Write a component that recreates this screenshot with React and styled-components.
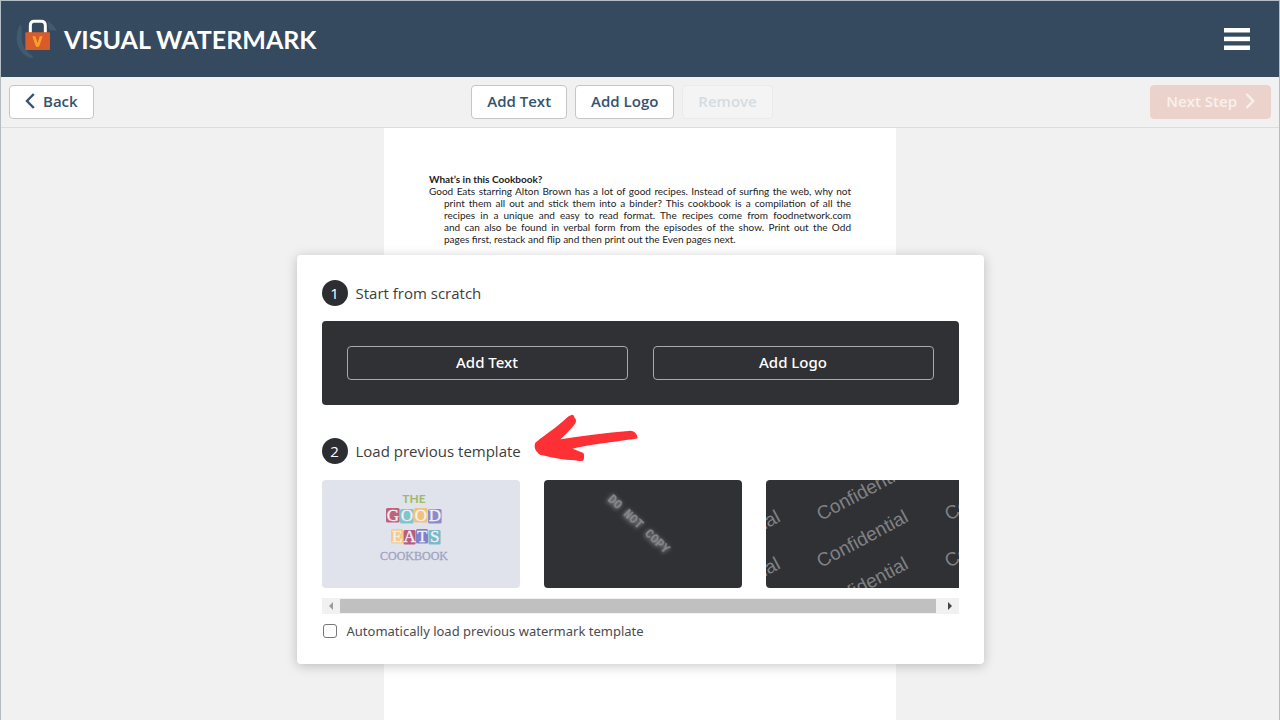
import React from "react";
import styled, { createGlobalStyle } from "styled-components";

const GlobalStyle = createGlobalStyle`
  *, *::before, *::after { box-sizing: border-box; }
  body { margin: 0; background: #f1f1f1; }
  h1, h2, p { margin: 0; }
  button { font: inherit; cursor: pointer; }
`;

const humanist = `"Open Sans", "Noto Sans", sans-serif`;

const Shell = styled.div`
  display: flex;
  flex-direction: column;
  min-height: 100vh;
  border: 1px solid #b4bcc4;
  border-bottom: 0;
  font-family: ${humanist};
`;

const Header = styled.header`
  display: flex;
  align-items: center;
  justify-content: space-between;
  height: 76px;
  padding: 0 29px 0 15px;
  background: #35495f;
`;

const Brand = styled.a`
  display: flex;
  align-items: center;
  gap: 6px;
  color: #fff;
  font-family: Lato, sans-serif;
  font-size: 25px;
  font-weight: 700;
  line-height: 32px;
  text-decoration: none;
  white-space: nowrap;
`;

const MenuButton = styled.button`
  display: flex;
  padding: 0;
  border: 0;
  background: none;
`;

const Toolbar = styled.nav`
  display: flex;
  align-items: center;
  justify-content: space-between;
  height: 51px;
  padding: 0 8px;
  border-bottom: 1px solid #dcdcdc;
  background: #f1f1f1;
`;

const ToolGroup = styled.div`
  display: flex;
  gap: 8px;
`;

const ToolButton = styled.button`
  display: flex;
  align-items: center;
  justify-content: center;
  gap: 8px;
  height: 34px;
  padding: 0 15px 2px;
  border: 1px solid #c6c6c6;
  border-radius: 4px;
  background: #fff;
  color: #34536e;
  font-size: 15px;
  font-weight: 600;
  line-height: 20px;
  white-space: nowrap;

  &:disabled {
    border-color: #e9eaeb;
    background: #f4f4f4;
    color: #d5dbe1;
  }
`;

const NextButton = styled(ToolButton)`
  &:disabled {
    border-color: #ebd3cb;
    background: #ebd3cb;
    color: #f9f0ed;
  }
`;

const Stage = styled.main`
  display: grid;
  flex: 1;
  justify-items: center;
`;

const Sheet = styled.article`
  grid-area: 1 / 1;
  width: 40%;
  min-width: 512px;
  padding: 45px 45px 0;
  background: #fff;
  color: #222;
  font-family: Lato, sans-serif;
  font-size: 10px;
  line-height: 12px;
`;

const SheetTitle = styled.h2`
  font-size: 10px;
  font-weight: 700;
  line-height: 12px;
`;

const SheetText = styled.p`
  padding-left: 15px;
`;

const Line = styled.span`
  display: block;
  text-align: justify;
  text-align-last: justify;

  &:first-child { margin-left: -15px; }
  &:last-child { text-align-last: left; }
`;

const Dialog = styled.section`
  grid-area: 1 / 1;
  align-self: start;
  width: 100%;
  max-width: 687px;
  margin-top: 127px;
  padding: 25px 25px 23px;
  border-radius: 4px;
  background: #fff;
  box-shadow: 0 2px 12px rgba(0, 0, 0, 0.22);
  z-index: 1;
`;

const StepTitle = styled.h2`
  position: relative;
  display: flex;
  align-items: center;
  gap: 8px;
  color: #3c3d40;
  font-size: 15px;
  font-weight: 400;
  line-height: 26px;
`;

const StepNumber = styled.span`
  width: 26px;
  height: 26px;
  border-radius: 50%;
  background: #2d2e31;
  color: #fff;
  text-align: center;
`;

const Arrow = styled.svg`
  position: absolute;
  left: 212px;
  bottom: 2px;
`;

const ScratchPanel = styled.div`
  display: grid;
  grid-template-columns: 1fr 1fr;
  gap: 25px;
  margin: 15px 0 33px;
  padding: 25px;
  border-radius: 4px;
  background: #303135;
`;

const OutlineButton = styled.button`
  height: 34px;
  padding: 0 0 2px;
  border: 1px solid #a9a9ab;
  border-radius: 4px;
  background: none;
  color: #fff;
  font-family: "Noto Sans", sans-serif;
  font-size: 15px;
  font-weight: 500;
  line-height: 20px;
`;

const Templates = styled.div`
  display: flex;
  gap: 24px;
  margin-top: 16px;
  overflow: hidden;
`;

const Template = styled.button`
  flex: none;
  width: 198px;
  height: 108px;
  padding: 0;
  border: 0;
  border-radius: 4px;
  overflow: hidden;
  background: ${(p) => (p.$light ? "#e0e2ec" : "#303135")};

  svg { display: block; }
`;

const ScrollBar = styled.div`
  display: flex;
  align-items: center;
  height: 16px;
  margin-top: 10px;
  background: #f1f1f1;
`;

const ScrollButton = styled.button`
  display: flex;
  align-items: center;
  justify-content: center;
  width: 18px;
  height: 16px;
  padding: 0;
  border: 0;
  background: none;
  color: ${(p) => (p.$atEnd ? "#9c9c9c" : "#444")};
`;

const ScrollThumb = styled.div`
  flex: 1;
  height: 14px;
  margin-right: 5px;
  background: #c0c0c0;
`;

const AutoLoad = styled.label`
  display: flex;
  align-items: center;
  gap: 10px;
  margin-top: 7px;
  color: #4a4b4e;
  font-family: "Noto Sans", sans-serif;
  font-size: 13px;
  line-height: 20px;
`;

const CheckBox = styled.input`
  appearance: none;
  width: 14px;
  height: 14px;
  margin: 0 0 0 1px;
  border: 1px solid #777;
  border-radius: 3px;
  background: #fff;

  &:checked { background: #35495f; }
`;

const Lock = () => (
  <svg width="42" height="42" viewBox="48 57 126 126" fill="none" aria-hidden="true">
    <path d="M62 76C46 98 46 130 60 152C70 168 84 175 98 178L99 170C78 160 66 140 65 118V84Z" fill="#415a70" />
    <path d="M143 65C157 73 166 84 171 98C164 94 157 93 152 95L145 88Z" fill="#415a70" />
    <path d="M91 101V80Q91 67 103 67H123Q136 67 136 80V101" stroke="#fff" strokeWidth="9" />
    <rect x="76" y="100" width="74" height="53" rx="3" fill="#d85c2a" />
    <path d="M97 112H106L113 133L119 112H128L117 143H108Z" fill="#f9a02c" />
  </svg>
);

const Chevron = ({ right }) => (
  <svg width="10" height="16" viewBox="0 0 10 16" fill="none" stroke="currentColor" strokeWidth="2.4" aria-hidden="true">
    <path d={right ? "M1.5 1L8.2 8L1.5 15" : "M8.8 1L2 8L8.8 15"} />
  </svg>
);

const tileRows = [
  { y: 28, x: 64, w: 14, letters: [["G", "#c0627c"], ["O", "#80c5cb"], ["O", "#f3c27a"], ["D", "#8c8bc9"]] },
  { y: 49, x: 69, w: 12.5, letters: [["E", "#f7ca85"], ["A", "#b55f80"], ["T", "#7f82c8"], ["S", "#7cb9c6"]] },
];

const CookbookArt = () => (
  <svg width="198" height="108" viewBox="0 0 198 108">
    <text x="92" y="23" fontFamily="Lato, sans-serif" fontWeight="700" fontSize="12" textAnchor="middle" fill="#9dba68">THE</text>
    {tileRows.map((row) =>
      row.letters.map(([letter, color], i) => (
        <g key={`${row.y}-${i}`}>
          <rect x={row.x + i * row.w} y={row.y + (i % 2)} width={row.w - 0.4} height="14.5" rx="1.5" fill={color} />
          <text x={row.x + i * row.w + row.w / 2} y={row.y + 13} fontFamily="Liberation Serif, serif" fontSize="17" textAnchor="middle" fill="#f2f0f6" stroke="#f2f0f6" strokeWidth=".3">{letter}</text>
        </g>
      ))
    )}
    <text x="92" y="80" fontFamily="Liberation Serif, serif" fontSize="12" textAnchor="middle" fill="#a0a5c0" stroke="#a0a5c0" strokeWidth=".3">COOKBOOK</text>
  </svg>
);

const DoNotCopyArt = () => (
  <svg width="198" height="108" viewBox="0 0 198 108">
    <text transform="translate(63 20) rotate(43)" fontFamily="Liberation Mono, monospace" fontWeight="700" fontSize="12" fill="#8a8b8d" style={{ filter: "drop-shadow(0 1px 2px #a0a0a2)" }}>DO NOT COPY</text>
  </svg>
);

const ConfidentialArt = () => (
  <svg width="198" height="108" viewBox="0 0 198 108" fontFamily="Liberation Sans, sans-serif" fontSize="19" fill="#808184">
    {[-73, 55, 183].map((x) =>
      [41, 88, 135].map((y) => (
        <text key={`${x},${y}`} transform={`translate(${x} ${y}) rotate(-28)`}>Confidential</text>
      ))
    )}
  </svg>
);

const cookbookLines = [
  "Good Eats starring Alton Brown has a lot of good recipes. Instead of surfing the web, why not",
  "print them all out and stick them into a binder? This cookbook is a compilation of all the",
  "recipes in a unique and easy to read format. The recipes come from foodnetwork.com",
  "and can also be found in verbal form from the episodes of the show. Print out the Odd",
  "pages first, restack and flip and then print out the Even pages next.",
];

export default function App() {
  return (
    <Shell>
      <GlobalStyle />
      <Header>
        <Brand href="#"><Lock />VISUAL WATERMARK</Brand>
        <MenuButton aria-label="Menu">
          <svg width="26" height="22" viewBox="0 0 26 22" fill="#fff" aria-hidden="true">
            <rect width="26" height="4.5" />
            <rect y="8.7" width="26" height="4.5" />
            <rect y="17.5" width="26" height="4.5" />
          </svg>
        </MenuButton>
      </Header>
      <Toolbar>
        <ToolButton><Chevron />Back</ToolButton>
        <ToolGroup>
          <ToolButton>Add Text</ToolButton>
          <ToolButton>Add Logo</ToolButton>
          <ToolButton disabled>Remove</ToolButton>
        </ToolGroup>
        <NextButton disabled>Next Step<Chevron right /></NextButton>
      </Toolbar>
      <Stage>
        <Sheet>
          <SheetTitle>What’s in this Cookbook?</SheetTitle>
          <SheetText>
            {cookbookLines.map((line) => <Line key={line}>{line}</Line>)}
          </SheetText>
        </Sheet>
        <Dialog role="dialog" aria-label="Choose a watermark">
          <StepTitle><StepNumber>1</StepNumber>Start from scratch</StepTitle>
          <ScratchPanel>
            <OutlineButton>Add Text</OutlineButton>
            <OutlineButton>Add Logo</OutlineButton>
          </ScratchPanel>
          <StepTitle>
            <StepNumber>2</StepNumber>Load previous template
            <Arrow width="105" height="48" viewBox="672 27 315 144" fill="#fd3035" aria-hidden="true">
              <path d="M676 113C690 101 735 70 760 48Q778 29 788 29Q793 31 794 39Q800 43 797 53C790 66 765 90 751 103C820 92 890 83 955 78Q968 76 974 82Q984 91 983 100C950 107 860 115 788 131Q805 138 819 143Q824 146 822 155Q823 164 819 167Q806 169 795 166C760 165 725 158 697 151Q686 150 682 141C674 135 672 120 676 113Z" />
            </Arrow>
          </StepTitle>
          <Templates>
            <Template $light aria-label="The Good Eats Cookbook"><CookbookArt /></Template>
            <Template aria-label="Do not copy"><DoNotCopyArt /></Template>
            <Template aria-label="Confidential"><ConfidentialArt /></Template>
          </Templates>
          <ScrollBar>
            <ScrollButton $atEnd aria-label="Scroll left">
              <svg width="4" height="8" viewBox="0 0 4 8" fill="currentColor"><path d="M4 0V8L0 4Z" /></svg>
            </ScrollButton>
            <ScrollThumb />
            <ScrollButton aria-label="Scroll right">
              <svg width="4" height="8" viewBox="0 0 4 8" fill="currentColor"><path d="M0 0V8L4 4Z" /></svg>
            </ScrollButton>
          </ScrollBar>
          <AutoLoad><CheckBox type="checkbox" />Automatically load previous watermark template</AutoLoad>
        </Dialog>
      </Stage>
    </Shell>
  );
}
